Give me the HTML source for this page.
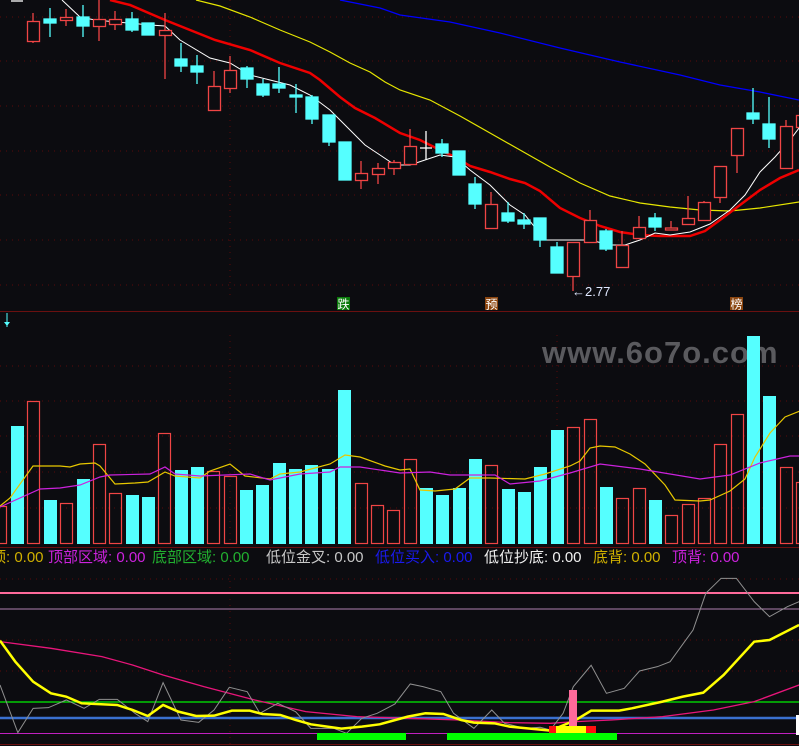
<!DOCTYPE html>
<html><head><meta charset="utf-8"><style>
html,body{margin:0;padding:0;background:#0c0c10;}
svg{display:block}
text{font-family:"Liberation Sans","Noto Sans CJK SC",sans-serif}
</style></head><body>
<svg width="799" height="746" viewBox="0 0 799 746" xmlns="http://www.w3.org/2000/svg">
<rect width="799" height="746" fill="#0c0c10"/>
<g stroke="#5a0a0a" stroke-dasharray="1,5" stroke-width="1">
<line x1="0" y1="17" x2="799" y2="17"/><line x1="0" y1="61" x2="799" y2="61"/><line x1="0" y1="106" x2="799" y2="106"/><line x1="0" y1="151" x2="799" y2="151"/><line x1="0" y1="195" x2="799" y2="195"/><line x1="0" y1="240" x2="799" y2="240"/><line x1="0" y1="285" x2="799" y2="285"/>
<line x1="0" y1="366" x2="799" y2="366"/><line x1="0" y1="401" x2="799" y2="401"/><line x1="0" y1="436" x2="799" y2="436"/><line x1="0" y1="472" x2="799" y2="472"/><line x1="0" y1="508" x2="799" y2="508"/>
<line x1="0" y1="579" x2="799" y2="579"/><line x1="0" y1="640" x2="799" y2="640"/><line x1="0" y1="671" x2="799" y2="671"/>
<line x1="230" y1="0" x2="230" y2="298"/><line x1="230" y1="335" x2="230" y2="545"/><line x1="230" y1="575" x2="230" y2="745"/>
<line x1="557" y1="335" x2="557" y2="545"/>
</g>
<line x1="0" y1="311.5" x2="799" y2="311.5" stroke="#6a1010"/>
<line x1="0" y1="547.5" x2="799" y2="547.5" stroke="#6a1010"/>
<line x1="0" y1="744.5" x2="799" y2="744.5" stroke="#6a1010"/>

<polyline fill="none" stroke="#0000ff" stroke-width="1.3" points="340,0 380,8 400,15 450,22 500,33 560,48 620,62 680,75 720,85 760,92 799,100"/>
<polyline fill="none" stroke="#e6e600" stroke-width="1.2" points="196,0 220,6 250,17 280,30 310,42 330,52 350,63 370,72 385,82 400,90 430,100 460,116 490,133 520,150 550,167 580,183 610,196 640,203 670,207 700,210 730,211 760,208 799,202"/>
<polyline fill="none" stroke="#ee0000" stroke-width="2.5" points="110,0 130,5 165,20 190,30 215,40 250,50 280,63 310,73 320,80 340,97 355,108 375,118 400,133 420,140 440,150 455,157 470,166 490,172 510,179 525,183 540,191 560,208 580,218 600,226 620,232 640,235 660,236 690,236 705,231 720,220 740,205 760,190 780,178 799,170"/>
<polyline fill="none" stroke="#ffffff" stroke-width="1" points="62,0 80,17 95,20 150,25 165,26 180,40 210,58 230,63 250,75 270,80 290,85 310,95 330,110 345,125 365,145 380,155 395,165 410,165 425,160 440,155 455,157 470,170 490,185 510,205 525,215 545,240 570,240 590,240 610,245 625,245 640,240 655,233 670,235 690,232 710,224 730,210 745,195 760,172 775,157 790,140 799,128"/>

<g stroke-width="1.3">
<g stroke="#f04545" fill="#0c0c10">
<line x1="33" y1="13" x2="33" y2="43"/><rect x="27.5" y="21.5" width="12" height="20"/>
<line x1="66" y1="9" x2="66" y2="26"/><rect x="60.5" y="17.5" width="12" height="3"/>
<line x1="99" y1="0" x2="99" y2="41"/><rect x="93.5" y="19.5" width="12" height="7"/>
<line x1="115" y1="11" x2="115" y2="30"/><rect x="109.5" y="19.5" width="12" height="5"/>
<line x1="165" y1="13" x2="165" y2="79"/><rect x="159.5" y="30.5" width="12" height="5"/>
<line x1="214" y1="71" x2="214" y2="111"/><rect x="208.5" y="86.5" width="12" height="24"/>
<line x1="230" y1="56" x2="230" y2="93"/><rect x="224.5" y="70.5" width="12" height="18"/>
<line x1="361" y1="161" x2="361" y2="189"/><rect x="355.5" y="173.5" width="12" height="7"/>
<line x1="378" y1="163" x2="378" y2="184"/><rect x="372.5" y="168.5" width="12" height="6"/>
<line x1="394" y1="160" x2="394" y2="175"/><rect x="388.5" y="162.5" width="12" height="6"/>
<line x1="410" y1="129" x2="410" y2="165"/><rect x="404.5" y="146.5" width="12" height="18"/>
<line x1="491" y1="192" x2="491" y2="229"/><rect x="485.5" y="204.5" width="12" height="24"/>
<line x1="573" y1="242" x2="573" y2="291"/><rect x="567.5" y="242.5" width="12" height="34"/>
<line x1="590" y1="210" x2="590" y2="243"/><rect x="584.5" y="220.5" width="12" height="22"/>
<line x1="622" y1="231" x2="622" y2="267"/><rect x="616.5" y="245.5" width="12" height="22"/>
<line x1="639" y1="216" x2="639" y2="238"/><rect x="633.5" y="227.5" width="12" height="11"/>
<line x1="671" y1="221" x2="671" y2="230"/><rect x="665.5" y="228" width="12" height="2"/>
<line x1="688" y1="196" x2="688" y2="224"/><rect x="682.5" y="218.5" width="12" height="6"/>
<line x1="704" y1="201" x2="704" y2="220"/><rect x="698.5" y="202.5" width="12" height="18"/>
<line x1="720" y1="166" x2="720" y2="203"/><rect x="714.5" y="166.5" width="12" height="31"/>
<line x1="737" y1="128" x2="737" y2="173"/><rect x="731.5" y="128.5" width="12" height="27"/>
<line x1="786" y1="120" x2="786" y2="168"/><rect x="780.5" y="126.5" width="12" height="42"/>
<rect x="796.5" y="115.5" width="12" height="12"/>
</g>
<g stroke="#55ffff" fill="#55ffff">
<line x1="50" y1="8" x2="50" y2="37"/><rect x="44" y="19" width="12" height="4"/>
<line x1="83" y1="5" x2="83" y2="37"/><rect x="77" y="17" width="12" height="9"/>
<line x1="132" y1="12" x2="132" y2="32"/><rect x="126" y="19" width="12" height="11"/>
<rect x="142" y="23" width="12" height="12"/>
<line x1="181" y1="43" x2="181" y2="72"/><rect x="175" y="59" width="12" height="7"/>
<line x1="197" y1="55" x2="197" y2="84"/><rect x="191" y="66" width="12" height="6"/>
<line x1="247" y1="66" x2="247" y2="88"/><rect x="241" y="68" width="12" height="11"/>
<line x1="263" y1="79" x2="263" y2="97"/><rect x="257" y="84" width="12" height="11"/>
<line x1="279" y1="67" x2="279" y2="93"/><rect x="273" y="84" width="12" height="4"/>
<line x1="296" y1="84" x2="296" y2="113"/><rect x="290" y="95" width="12" height="2"/>
<line x1="312" y1="95" x2="312" y2="124"/><rect x="306" y="97" width="12" height="22"/>
<line x1="329" y1="115" x2="329" y2="146"/><rect x="323" y="115" width="12" height="27"/>
<rect x="339" y="142" width="12" height="38"/>
<line x1="442" y1="139" x2="442" y2="157"/><rect x="436" y="144" width="12" height="9"/>
<rect x="453" y="151" width="12" height="24"/>
<line x1="475" y1="177" x2="475" y2="209"/><rect x="469" y="184" width="12" height="20"/>
<line x1="508" y1="202" x2="508" y2="223"/><rect x="502" y="213" width="12" height="8"/>
<line x1="524" y1="213" x2="524" y2="229"/><rect x="518" y="220" width="12" height="4"/>
<line x1="540" y1="218" x2="540" y2="247"/><rect x="534" y="218" width="12" height="22"/>
<line x1="557" y1="242" x2="557" y2="273"/><rect x="551" y="247" width="12" height="26"/>
<line x1="606" y1="229" x2="606" y2="251"/><rect x="600" y="231" width="12" height="18"/>
<line x1="655" y1="213" x2="655" y2="231"/><rect x="649" y="218" width="12" height="9"/>
<line x1="753" y1="88" x2="753" y2="124"/><rect x="747" y="113" width="12" height="6"/>
<line x1="769" y1="97" x2="769" y2="148"/><rect x="763" y="124" width="12" height="15"/>
</g>
<g stroke="#ffffff"><line x1="426" y1="131" x2="426" y2="160"/><line x1="420" y1="148" x2="432" y2="148"/><line x1="11" y1="1" x2="23" y2="1"/></g>
</g>
<text x="572" y="296" fill="#e0e8ff" font-size="13">←2.77</text>
<rect x="337" y="297" width="13" height="13" fill="#0a7a0a"/><text x="337.5" y="308.5" fill="#fff" font-size="12">跌</text>
<rect x="485" y="297" width="13" height="13" fill="#8a4510"/><text x="485.5" y="308.5" fill="#fff" font-size="12">预</text>
<rect x="730" y="297" width="13" height="13" fill="#8a4510"/><text x="730.5" y="308.5" fill="#fff" font-size="12">榜</text>
<line x1="7" y1="313" x2="7" y2="327" stroke="#55ffff"/><path d="M4,322 L10,322 L7,326Z" fill="#55ffff"/>

<text x="542" y="363" fill="#5a5a5e" font-size="31" font-weight="bold" letter-spacing="1">www.6o7o.com</text>

<g fill="#55ffff">
<rect x="11" y="426" width="13" height="118"/><rect x="44" y="500" width="13" height="44"/><rect x="77" y="479" width="13" height="65"/><rect x="126" y="495" width="13" height="49"/><rect x="142" y="497" width="13" height="47"/><rect x="175" y="470" width="13" height="74"/><rect x="191" y="467" width="13" height="77"/><rect x="240" y="490" width="13" height="54"/><rect x="256" y="485" width="13" height="59"/><rect x="273" y="463" width="13" height="81"/><rect x="289" y="469" width="13" height="75"/><rect x="305" y="465" width="13" height="79"/><rect x="322" y="469" width="13" height="75"/><rect x="338" y="390" width="13" height="154"/><rect x="420" y="488" width="13" height="56"/><rect x="436" y="495" width="13" height="49"/><rect x="453" y="488" width="13" height="56"/><rect x="469" y="459" width="13" height="85"/><rect x="502" y="489" width="13" height="55"/><rect x="518" y="492" width="13" height="52"/><rect x="534" y="467" width="13" height="77"/><rect x="551" y="430" width="13" height="114"/><rect x="600" y="487" width="13" height="57"/><rect x="649" y="500" width="13" height="44"/><rect x="747" y="336" width="13" height="208"/><rect x="763" y="396" width="13" height="148"/>
</g>
<g fill="none" stroke="#f04545" stroke-width="1.2">
<rect x="-5.5" y="506.5" width="12" height="37"/><rect x="27.5" y="401.5" width="12" height="142"/><rect x="60.5" y="503.5" width="12" height="40"/><rect x="93.5" y="444.5" width="12" height="99"/><rect x="109.5" y="493.5" width="12" height="50"/><rect x="158.5" y="433.5" width="12" height="110"/><rect x="207.5" y="471.5" width="12" height="72"/><rect x="224.5" y="476.5" width="12" height="67"/><rect x="355.5" y="483.5" width="12" height="60"/><rect x="371.5" y="505.5" width="12" height="38"/><rect x="387.5" y="510.5" width="12" height="33"/><rect x="404.5" y="459.5" width="12" height="84"/><rect x="485.5" y="465.5" width="12" height="78"/><rect x="567.5" y="427.5" width="12" height="116"/><rect x="584.5" y="419.5" width="12" height="124"/><rect x="616.5" y="498.5" width="12" height="45"/><rect x="633.5" y="488.5" width="12" height="55"/><rect x="665.5" y="515.5" width="12" height="28"/><rect x="682.5" y="504.5" width="12" height="39"/><rect x="698.5" y="498.5" width="12" height="45"/><rect x="714.5" y="444.5" width="12" height="99"/><rect x="731.5" y="414.5" width="12" height="129"/><rect x="780.5" y="467.5" width="12" height="76"/><rect x="796.5" y="482.5" width="12" height="61"/>
</g>
<polyline fill="none" stroke="#e8c800" stroke-width="1.2" points="0,506 10,498 33,466 60,466 70,467 80,464 95,463 100,466 115,484 135,483 148,482 165,472 175,476 200,478 210,471 230,464 245,476 270,479 280,474 300,472 330,464 345,455 360,457 385,466 400,470 410,469 420,490 435,491 455,489 470,478 490,478 525,479 545,474 570,466 580,461 590,448 600,446 615,447 630,454 645,464 665,485 675,500 700,501 710,500 730,491 745,479 755,457 770,433 785,417 800,411"/>
<polyline fill="none" stroke="#cc22dd" stroke-width="1.2" points="0,507 40,489 60,488 80,485 100,477 110,475 150,474 165,467 175,474 200,476 250,474 270,480 300,474 330,472 340,467 360,467 400,473 430,472 450,475 495,475 510,484 540,481 570,473 600,464 640,469 700,479 730,475 760,463 790,456 799,456"/>

<g font-size="15">
<text x="-9" y="562" fill="#d0b000">顶: 0.00</text>
<text x="48" y="562" fill="#cc22dd">顶部区域: 0.00</text>
<text x="152" y="562" fill="#22b030">底部区域: 0.00</text>
<text x="266" y="562" fill="#c8c8c8">低位金叉: 0.00</text>
<text x="375" y="562" fill="#1a1aee">低位买入: 0.00</text>
<text x="484" y="562" fill="#f0f0f0">低位抄底: 0.00</text>
<text x="593" y="562" fill="#d0b000">底背: 0.00</text>
<text x="672" y="562" fill="#cc22dd">顶背: 0.00</text>
</g>

<line x1="0" y1="593" x2="799" y2="593" stroke="#ff6a9a" stroke-width="2"/>
<line x1="0" y1="609" x2="799" y2="609" stroke="#b080b0" stroke-width="1"/>
<line x1="0" y1="702" x2="799" y2="702" stroke="#00ee00" stroke-width="1.3"/>
<line x1="0" y1="718" x2="799" y2="718" stroke="#3a70d0" stroke-width="2.5"/>
<line x1="0" y1="733.5" x2="799" y2="733.5" stroke="#c020c0" stroke-width="1"/>
<g transform="translate(0,540) scale(0.5096,0.3333)" fill="none">
<polyline vector-effect="non-scaling-stroke" stroke="#e8157a" stroke-width="1.3" points="0,305 100,325 200,350 260,375 320,405 400,440 500,480 600,515 700,530 800,535 900,540 1000,548 1080,550 1130,545 1200,540 1300,530 1400,510 1480,485 1568,435"/>
<polyline vector-effect="non-scaling-stroke" stroke="#909090" stroke-width="1" points="0,435 35,578 65,505 95,503 130,480 165,505 195,478 230,478 265,520 290,545 320,428 355,540 390,547 420,510 450,442 485,455 510,520 545,490 580,515 610,565 655,565 680,580 710,535 740,520 775,492 805,432 830,440 865,455 890,520 930,565 965,510 990,550 1030,565 1060,562 1080,570 1105,520 1125,440 1160,376 1190,460 1225,445 1255,393 1290,380 1315,365 1360,270 1385,160 1415,115 1445,115 1480,185 1510,230 1545,200 1568,185"/>
<polyline vector-effect="non-scaling-stroke" stroke="#ffff00" stroke-width="2.5" points="0,302 30,365 65,425 100,460 130,470 160,490 230,495 260,510 290,528 320,495 350,515 385,528 420,527 455,512 490,512 515,522 550,525 580,540 610,553 670,566 710,560 745,553 800,530 835,520 870,522 905,540 930,548 970,550 1000,560 1040,566 1080,572 1130,540 1160,512 1215,512 1240,505 1300,485 1340,470 1380,458 1420,405 1480,305 1510,300 1568,255"/>
</g>
<rect x="317" y="733" width="89" height="7" fill="#00ff00"/>
<rect x="447" y="733" width="170" height="7" fill="#00ff00"/>
<rect x="549" y="726" width="47" height="7" fill="#ff1010"/>
<rect x="556" y="726" width="30" height="7" fill="#ffff00"/>
<rect x="569" y="690" width="8" height="36" fill="#ff6a9a"/>
<rect x="796" y="715" width="3" height="20" fill="#ffffff"/>
</svg>
</body></html>
